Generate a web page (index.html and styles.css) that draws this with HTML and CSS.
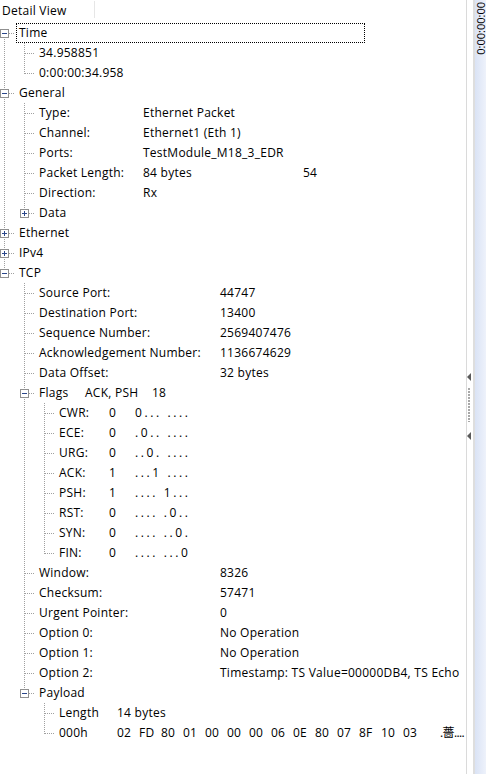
FILE: index.html
```html
<!DOCTYPE html>
<html>
<head>
<meta charset="utf-8">
<link rel="stylesheet" href="styles.css">
</head>
<body>
<div class="app">
  <div class="main">
    <div class="header"><div class="hcell">Detail View</div></div>
    <div class="tree">
      <div class="row"><span class="n first"><i class="box minus"></i></span><span class="focus">Time</span></div>
      <div class="row"><span class="g v"></span><span class="n"></span><span>34.958851</span></div>
      <div class="row"><span class="g v"></span><span class="n last"></span><span>0:00:00:34.958</span></div>
      <div class="row"><span class="n"><i class="box minus"></i></span><span>General</span></div>
      <div class="row"><span class="g v"></span><span class="n"></span><span class="l w104">Type:</span><span>Ethernet Packet</span></div>
      <div class="row"><span class="g v"></span><span class="n"></span><span class="l w104">Channel:</span><span>Ethernet1 (Eth 1)</span></div>
      <div class="row"><span class="g v"></span><span class="n"></span><span class="l w104">Ports:</span><span>TestModule_M18_3_EDR</span></div>
      <div class="row"><span class="g v"></span><span class="n"></span><span class="l w104">Packet Length:</span><span class="l w160">84 bytes</span><span>54</span></div>
      <div class="row"><span class="g v"></span><span class="n"></span><span class="l w104">Direction:</span><span>Rx</span></div>
      <div class="row"><span class="g v"></span><span class="n last"><i class="box plus"></i></span><span>Data</span></div>
      <div class="row"><span class="n"><i class="box plus"></i></span><span>Ethernet</span></div>
      <div class="row"><span class="n"><i class="box plus"></i></span><span>IPv4</span></div>
      <div class="row"><span class="n last"><i class="box minus"></i></span><span>TCP</span></div>
      <div class="row"><span class="g"></span><span class="n"></span><span class="l w181">Source Port:</span><span>44747</span></div>
      <div class="row"><span class="g"></span><span class="n"></span><span class="l w181">Destination Port:</span><span>13400</span></div>
      <div class="row"><span class="g"></span><span class="n"></span><span class="l w181">Sequence Number:</span><span>2569407476</span></div>
      <div class="row"><span class="g"></span><span class="n"></span><span class="l w181">Acknowledgement Number:</span><span>1136674629</span></div>
      <div class="row"><span class="g"></span><span class="n"></span><span class="l w181">Data Offset:</span><span>32 bytes</span></div>
      <div class="row"><span class="g"></span><span class="n"><i class="box minus"></i></span><span class="l w46">Flags</span><span class="l w67">ACK, PSH</span><span>18</span></div>
      <div class="row"><span class="g"></span><span class="g v"></span><span class="n"></span><span class="l w50">CWR:</span><span class="l w26">0</span><span class="bits">0... ....</span></div>
      <div class="row"><span class="g"></span><span class="g v"></span><span class="n"></span><span class="l w50">ECE:</span><span class="l w26">0</span><span class="bits">.0.. ....</span></div>
      <div class="row"><span class="g"></span><span class="g v"></span><span class="n"></span><span class="l w50">URG:</span><span class="l w26">0</span><span class="bits">..0. ....</span></div>
      <div class="row"><span class="g"></span><span class="g v"></span><span class="n"></span><span class="l w50">ACK:</span><span class="l w26">1</span><span class="bits">...1 ....</span></div>
      <div class="row"><span class="g"></span><span class="g v"></span><span class="n"></span><span class="l w50">PSH:</span><span class="l w26">1</span><span class="bits">.... 1...</span></div>
      <div class="row"><span class="g"></span><span class="g v"></span><span class="n"></span><span class="l w50">RST:</span><span class="l w26">0</span><span class="bits">.... .0..</span></div>
      <div class="row"><span class="g"></span><span class="g v"></span><span class="n"></span><span class="l w50">SYN:</span><span class="l w26">0</span><span class="bits">.... ..0.</span></div>
      <div class="row"><span class="g"></span><span class="g v"></span><span class="n last"></span><span class="l w50">FIN:</span><span class="l w26">0</span><span class="bits">.... ...0</span></div>
      <div class="row"><span class="g"></span><span class="n"></span><span class="l w181">Window:</span><span>8326</span></div>
      <div class="row"><span class="g"></span><span class="n"></span><span class="l w181">Checksum:</span><span>57471</span></div>
      <div class="row"><span class="g"></span><span class="n"></span><span class="l w181">Urgent Pointer:</span><span>0</span></div>
      <div class="row"><span class="g"></span><span class="n"></span><span class="l w181">Option 0:</span><span>No Operation</span></div>
      <div class="row"><span class="g"></span><span class="n"></span><span class="l w181">Option 1:</span><span>No Operation</span></div>
      <div class="row"><span class="g"></span><span class="n"></span><span class="l w181">Option 2:</span><span>Timestamp: TS Value=00000DB4, TS Echo</span></div>
      <div class="row"><span class="g"></span><span class="n last"><i class="box minus"></i></span><span>Payload</span></div>
      <div class="row"><span class="g"></span><span class="g"></span><span class="n"></span><span class="l w58">Length</span><span>14 bytes</span></div>
      <div class="row"><span class="g"></span><span class="g"></span><span class="n last"></span><span class="l w58">000h</span><span class="hx">02</span><span class="hx">FD</span><span class="hx">80</span><span class="hx">01</span><span class="hx">00</span><span class="hx">00</span><span class="hx">00</span><span class="hx">06</span><span class="hx">0E</span><span class="hx">80</span><span class="hx">07</span><span class="hx">8F</span><span class="hx">10</span><span class="hx last">03</span><span class="ascii">.薔....</span></div>
    </div>
  </div>
  <div class="gap">
    <i class="arrow a1"></i>
    <i class="grip"></i>
    <i class="arrow a2"></i>
  </div>
  <div class="split"></div>
  <div class="side"><span class="vt">0:00:00:00</span></div>
</div>
</body>
</html>
```

FILE: styles.css
```css
html, body {
  margin: 0;
  padding: 0;
  background: #fff;
}
body {
  font-family: "Open Sans", "Noto Sans CJK SC", sans-serif;
  font-size: 12px;
  letter-spacing: 0.25px;
  color: #000;
}
.app {
  display: flex;
  height: 774px;
  overflow: hidden;
}
.main {
  width: 466px;
  flex: none;
  border-right: 1px solid #dadada;
  overflow: hidden;
}
.header {
  height: 23px;
  box-sizing: border-box;
  padding-top: 1px;
  display: flex;
}
.hcell {
  width: 95px;
  height: 17px;
  box-sizing: border-box;
  padding-left: 2px;
  border-right: 1px solid #e6e6e6;
  line-height: 20px;
  white-space: nowrap;
}
.tree {
  display: flex;
  flex-direction: column;
}
.row {
  display: flex;
  height: 20px;
  line-height: 20px;
  white-space: nowrap;
}
.g {
  width: 20px;
  flex: none;
  position: relative;
}
.g.v::before,
.n::before {
  content: "";
  position: absolute;
  left: 4px;
  top: 0;
  bottom: 0;
  width: 1px;
  background: repeating-linear-gradient(to bottom, #a0a0a0 0 1px, transparent 1px 2px);
}
.n {
  width: 19px;
  flex: none;
  position: relative;
}
.n.first::before {
  top: 10px;
}
.n.last::before {
  bottom: auto;
  height: 11px;
}
.n::after {
  content: "";
  position: absolute;
  left: 5px;
  top: 10px;
  width: 10px;
  height: 1px;
  background: repeating-linear-gradient(to right, #a0a0a0 0 1px, transparent 1px 2px);
}
.box {
  position: absolute;
  left: 0;
  top: 6px;
  width: 9px;
  height: 9px;
  box-sizing: border-box;
  border: 1px solid #909090;
  background: #fff;
  z-index: 1;
}
.box::before {
  content: "";
  position: absolute;
  left: 1px;
  top: 3px;
  width: 5px;
  height: 1px;
  background: #2a468a;
}
.box.plus::after {
  content: "";
  position: absolute;
  left: 3px;
  top: 1px;
  width: 1px;
  height: 5px;
  background: #2a468a;
}
.focus {
  margin-left: -3px;
  padding-left: 2px;
  width: 349px;
  height: 20px;
  box-sizing: border-box;
  border: 1px dotted #000;
  line-height: 18px;
}
.l { flex: none; }
.w104 { width: 104px; }
.w181 { width: 181px; }
.w46 { width: 46px; }
.w67 { width: 67px; }
.w50 { width: 50px; }
.w26 { width: 26px; }
.w160 { width: 160px; }
.w58 { width: 58px; }
.bits {
  letter-spacing: 2.6px;
}
.hx {
  width: 22px;
  flex: none;
}
.hx.last {
  width: 37px;
}
.ascii {
  flex: none;
  letter-spacing: -0.6px;
}
.gap {
  width: 6px;
  flex: none;
  position: relative;
}
.arrow {
  position: absolute;
  left: 0;
  width: 0;
  height: 0;
  border-right: 4px solid #5a5a5a;
  border-top: 4px solid transparent;
  border-bottom: 4px solid transparent;
}
.a1 { top: 373px; }
.a2 { top: 432px; }
.grip {
  position: absolute;
  left: 1px;
  top: 388px;
  width: 2px;
  height: 34px;
  background: repeating-linear-gradient(to bottom, #a8a8a8 0 2px, transparent 2px 3px);
}
.split {
  width: 2px;
  flex: none;
  background: #dedede;
}
.side {
  width: 11px;
  flex: none;
  position: relative;
  overflow: hidden;
  background: linear-gradient(to right, #dae3f5, #eef2fb);
}
.vt {
  position: absolute;
  left: 0;
  top: 2px;
  font-size: 11px;
  letter-spacing: 0;
  line-height: 11px;
  white-space: nowrap;
  transform-origin: 0 0;
  transform: rotate(-90deg) translateX(-100%);
}
```
